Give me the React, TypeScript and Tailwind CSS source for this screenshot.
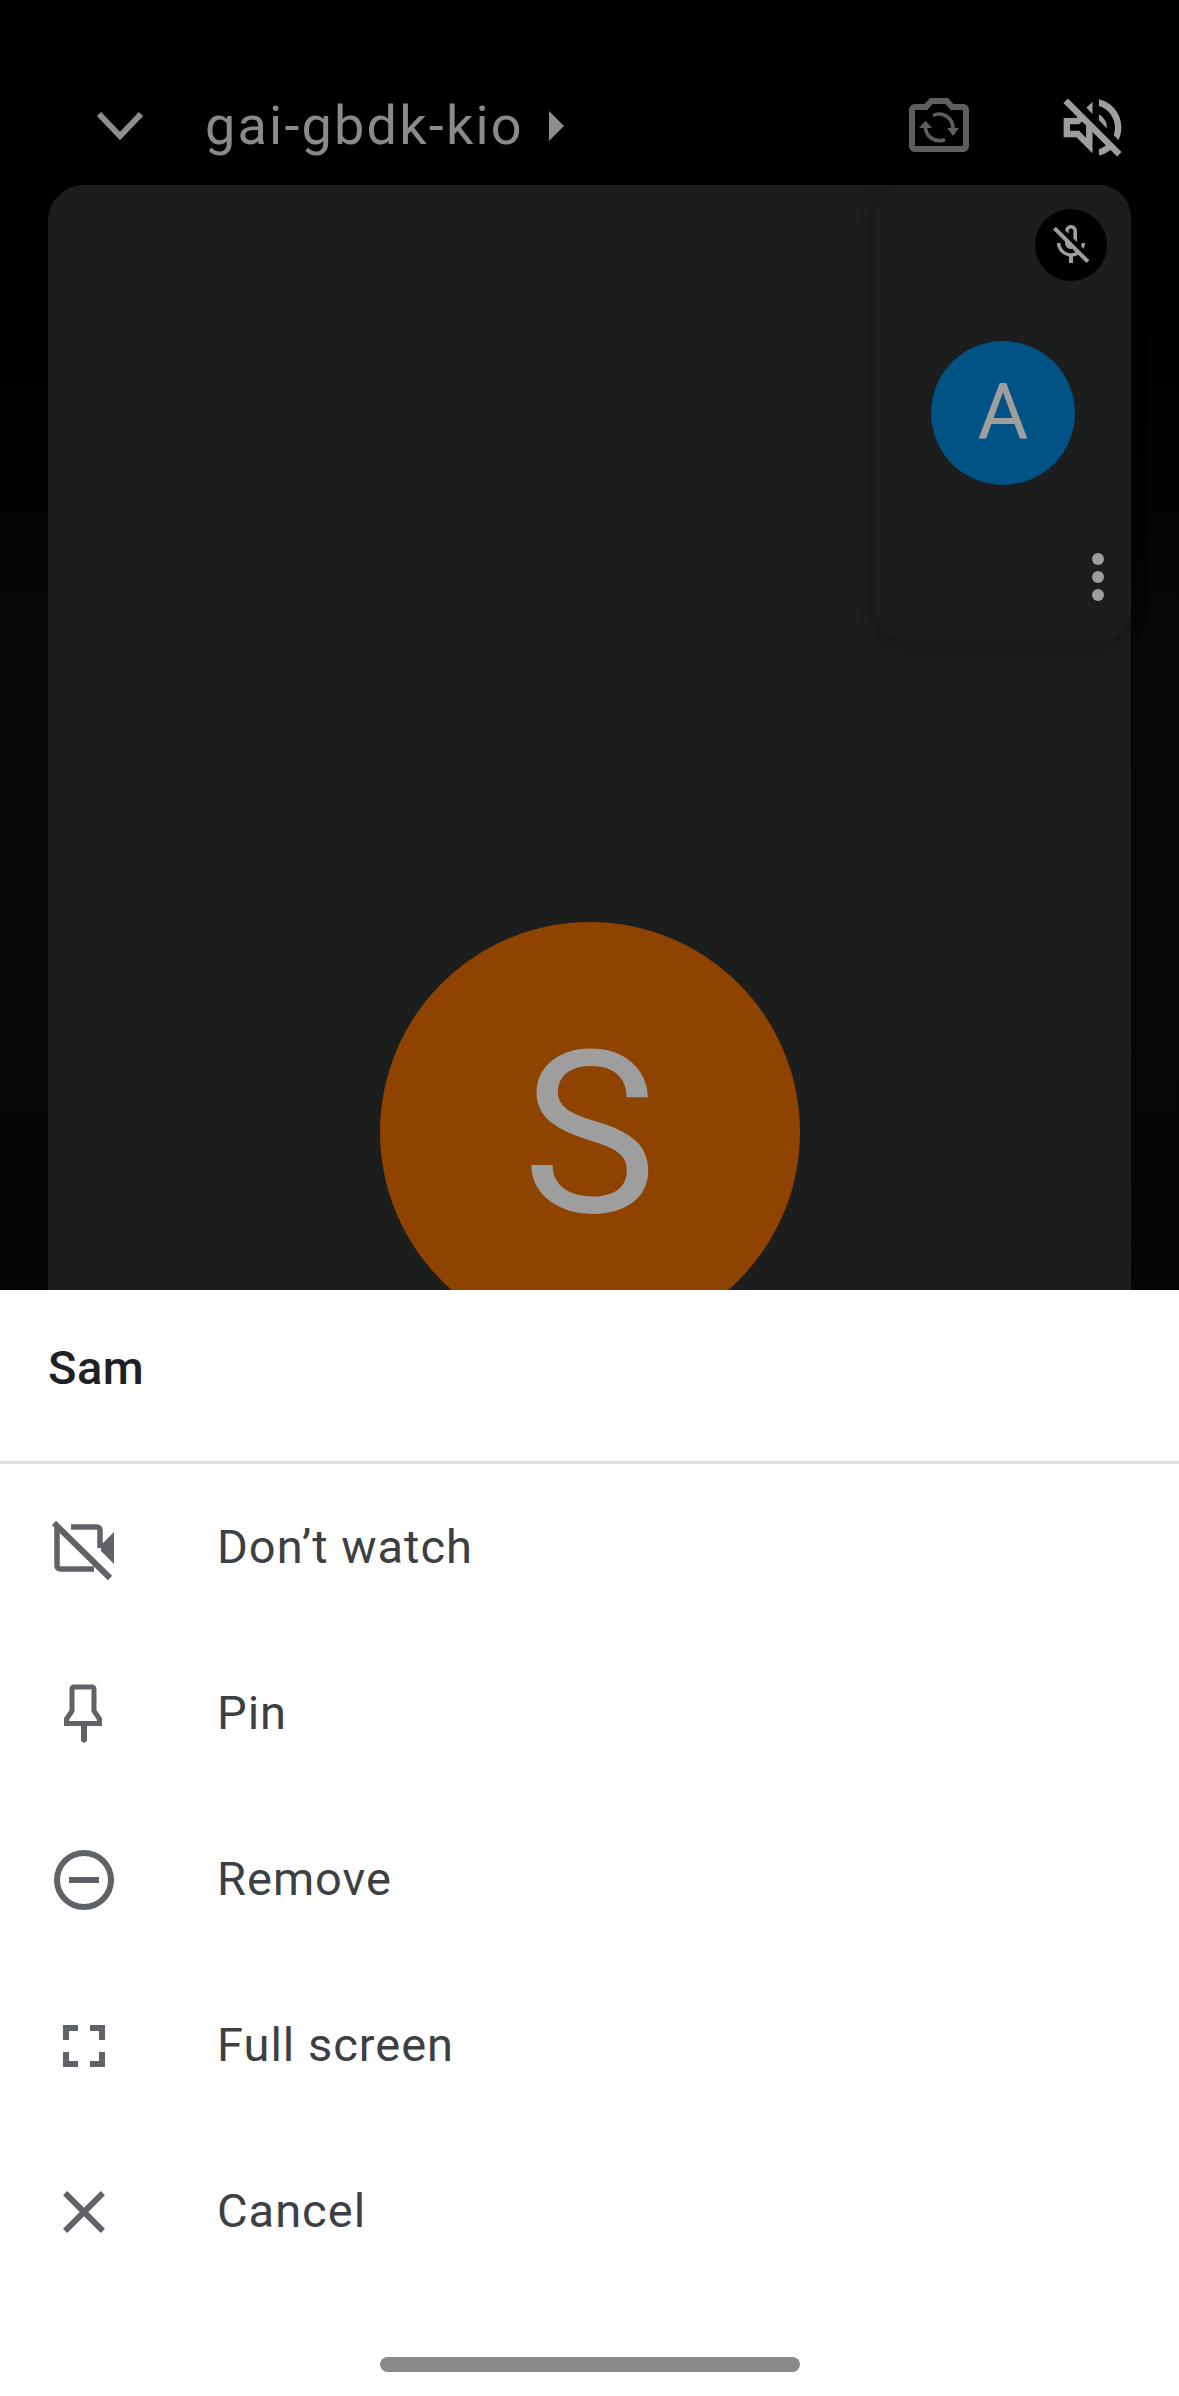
const font = "font-['Roboto',sans-serif]";

function ChevronDown() {
	return (
		<svg width="48" height="32" viewBox="0 0 48 32" fill="none" className="shrink-0">
			<path d="M3 4 L24 26 L45 4" stroke="#8e8e8e" strokeWidth="6" />
		</svg>
	);
}

function CameraSwitch() {
	return (
		<svg width="72" height="72" viewBox="0 0 24 24" fill="none" className="mb-[2px] shrink-0">
			<path
				fill="#5f5f5f"
				d="M20 5h-3.17L15 3H9L7.17 5H4c-1.1 0-2 .9-2 2v12c0 1.1.9 2 2 2h16c1.1 0 2-.9 2-2V7c0-1.1-.9-2-2-2zm0 14H4V7h4.05l1.83-2h4.24l1.83 2H20v12z"
			/>
			<path d="M10 8.8 C13 7.4 16.6 9.4 16.7 13.2" stroke="#5f5f5f" strokeWidth="1.2" />
			<path d="M7.5 12.8 C7.6 16 10.8 18 14 16.9" stroke="#5f5f5f" strokeWidth="1.2" />
			<path fill="#5f5f5f" d="M14.7 13h4l-2 2.7zM5.3 13h4.4l-2.2-2.4z" />
		</svg>
	);
}

function VolumeOff() {
	return (
		<svg width="77" height="77" viewBox="0 0 24 24" className="mt-[2px] shrink-0">
			<path
				fill="#9e9e9e"
				d="M4.34 2.93L2.93 4.34 7.29 8.7 7 9H3v6h4l5 5v-6.59l4.18 4.18c-.65.49-1.38.88-2.18 1.11v2.06c1.34-.3 2.57-.92 3.61-1.75l2.05 2.05 1.41-1.41L4.34 2.93zM10 15.17L7.83 13H5v-2h2.83l.88-.88L10 11.41v3.76zM19 12c0 .82-.15 1.61-.41 2.34l1.53 1.53c.56-1.17.88-2.48.88-3.87 0-4.28-2.99-7.86-7-8.77v2.06c2.89.86 5 3.54 5 6.71zm-7-8l-1.88 1.88L12 7.76zm4.5 8c0-1.77-1.02-3.29-2.5-4.03v1.79l2.48 2.48c.01-.08.02-.16.02-.24z"
			/>
		</svg>
	);
}

function MicOff() {
	return (
		<svg width="48" height="48" viewBox="0 0 24 24">
			<path
				fill="#9e9e9e"
				d="M10.8 4.9c0-.66.54-1.2 1.2-1.2s1.2.54 1.2 1.2l-.01 3.91L15 10.6V5c0-1.66-1.34-3-3-3-1.54 0-2.79 1.16-2.96 2.65l1.76 1.76V4.9zM19 11h-1.7c0 .58-.1 1.13-.27 1.64l1.27 1.27c.44-.88.7-1.87.7-2.91zM4.41 2.86L3 4.27l6 6V11c0 1.66 1.34 3 3 3 .23 0 .44-.03.65-.08l1.66 1.66c-.71.33-1.5.52-2.31.52-2.76 0-5.3-2.1-5.3-5.1H5c0 3.41 2.72 6.23 6 6.72V21h2v-3.28c.91-.13 1.77-.45 2.55-.9l4.2 4.2 1.41-1.41L4.41 2.86z"
			/>
		</svg>
	);
}

function VideoOffIcon() {
	return (
		<svg width="72" height="72" viewBox="0 0 72 72" fill="none">
			<path d="M9 16V54a3 3 0 0 0 3 3H46" stroke="#5f6368" strokeWidth="5.5" />
			<path d="M23 15H49a3 3 0 0 1 3 3V36" stroke="#5f6368" strokeWidth="5.5" />
			<path d="M66 20L53 33V39L66 52Z" fill="#5f6368" />
			<path d="M6 11L62 66" stroke="#5f6368" strokeWidth="6" />
		</svg>
	);
}

function PinIcon() {
	return (
		<svg width="72" height="72" viewBox="0 0 72 72" fill="none">
			<path
				d="M24 33V11a2 2 0 0 1 2-2H44a2 2 0 0 1 2 2V33l5.5 8v4.5H18.500V41Z"
				stroke="#5f6368"
				strokeWidth="5"
			/>
			<path d="M33 47H39V63L36 65L33 63Z" fill="#5f6368" />
		</svg>
	);
}

function RemoveIcon() {
	return (
		<svg width="72" height="72" viewBox="0 0 72 72" fill="none">
			<circle cx="36" cy="36" r="27" stroke="#5f6368" strokeWidth="6" />
			<path d="M21 36H51" stroke="#5f6368" strokeWidth="6" />
		</svg>
	);
}

function FullScreenIcon() {
	return (
		<svg width="72" height="72" viewBox="0 0 24 24">
			<path
				fill="#5f6368"
				d="M7 14H5v5h5v-2H7v-3zm-2-4h2V7h3V5H5v5zm12 7h-3v2h5v-5h-2v3zM14 5v2h3v3h2V5h-5z"
			/>
		</svg>
	);
}

function CloseIcon() {
	return (
		<svg width="72" height="72" viewBox="0 0 24 24">
			<path
				fill="#5f6368"
				d="M19 6.410L17.590 5 12 10.590 6.410 5 5 6.410 10.590 12 5 17.590 6.410 19 12 13.410 17.590 19 19 17.590 13.410 12z"
			/>
		</svg>
	);
}

const actions = [
	{ label: "Don’t watch", icon: <VideoOffIcon /> },
	{ label: "Pin", icon: <PinIcon /> },
	{ label: "Remove", icon: <RemoveIcon /> },
	{ label: "Full screen", icon: <FullScreenIcon /> },
	{ label: "Cancel", icon: <CloseIcon /> },
];

function SelfTile() {
	return (
		<div className="absolute top-0 right-0 flex h-[456px] w-[256px] flex-col rounded-[32px] bg-[#1c1e1e] shadow-[0_4px_16px_rgba(0,0,0,0.25)]">
			<div className="flex justify-end pt-6 pr-6">
				<div className="flex size-[72px] items-center justify-center rounded-full bg-black">
					<MicOff />
				</div>
			</div>
			<div className="mt-[60px] flex justify-center">
				<div className="flex size-[144px] items-center justify-center rounded-full bg-[#005384] text-[78px] leading-none text-[#9e9e9e]">
					A
				</div>
			</div>
			<div className="mt-[68px] flex flex-col items-end gap-1.5 pr-[27px]">
				<span className="size-3 rounded-full bg-[#9e9e9e]" />
				<span className="size-3 rounded-full bg-[#9e9e9e]" />
				<span className="size-3 rounded-full bg-[#9e9e9e]" />
			</div>
		</div>
	);
}

export default function App() {
	return (
		<div className={`flex h-[2396px] w-[1179px] flex-col overflow-hidden bg-white ${font}`}>
			<div className="flex h-[1290px] shrink-0 flex-col overflow-hidden bg-gradient-to-b from-black via-[#070707] to-[#050505] px-12">
				<header className="flex h-[185px] shrink-0 items-center pt-[67px]">
					<div className="ml-[48px]">
						<ChevronDown />
					</div>
					<span className="ml-[61px] text-[54px] leading-none tracking-[2.2px] text-[#8a8a8a]">
						gai-gbdk-kio
					</span>
					<span className="ml-[25px] h-0 w-0 border-y-[15px] border-l-[15px] border-y-transparent border-l-[#8e8e8e]" />
					<div className="ml-auto flex items-center gap-[79px]">
						<CameraSwitch />
						<VolumeOff />
					</div>
				</header>
				<div className="relative flex flex-1 justify-center rounded-t-[36px] bg-[#1c1e1e] pt-[737px]">
					<div className="flex size-[420px] shrink-0 items-center justify-center rounded-full bg-[#8f4300] pt-[6px] text-[226px] leading-none text-[#9e9e9e]">
						S
					</div>
					<SelfTile />
				</div>
			</div>
			<div className="flex flex-1 flex-col">
				<div className="flex h-[171px] shrink-0 items-center px-12 pb-[14px] text-[47px] font-medium tracking-[0.5px] text-[#202124]">
					Sam
				</div>
				<div className="h-[3px] shrink-0 bg-[#e0e0e0]" />
				<ul className="pt-px">
					{actions.map((action) => (
						<li key={action.label} className="flex h-[166px] items-center px-12">
							<span className="flex size-[72px] shrink-0 items-center justify-center">
								{action.icon}
							</span>
							<span className="mb-[3px] ml-[97px] text-[47px] leading-none tracking-[1px] text-[#3c4043]">
								{action.label}
							</span>
						</li>
					))}
				</ul>
				<div className="flex justify-center pt-[62px]">
					<div className="h-[15px] w-[420px] rounded-full bg-[#8a8a8a]" />
				</div>
			</div>
		</div>
	);
}
